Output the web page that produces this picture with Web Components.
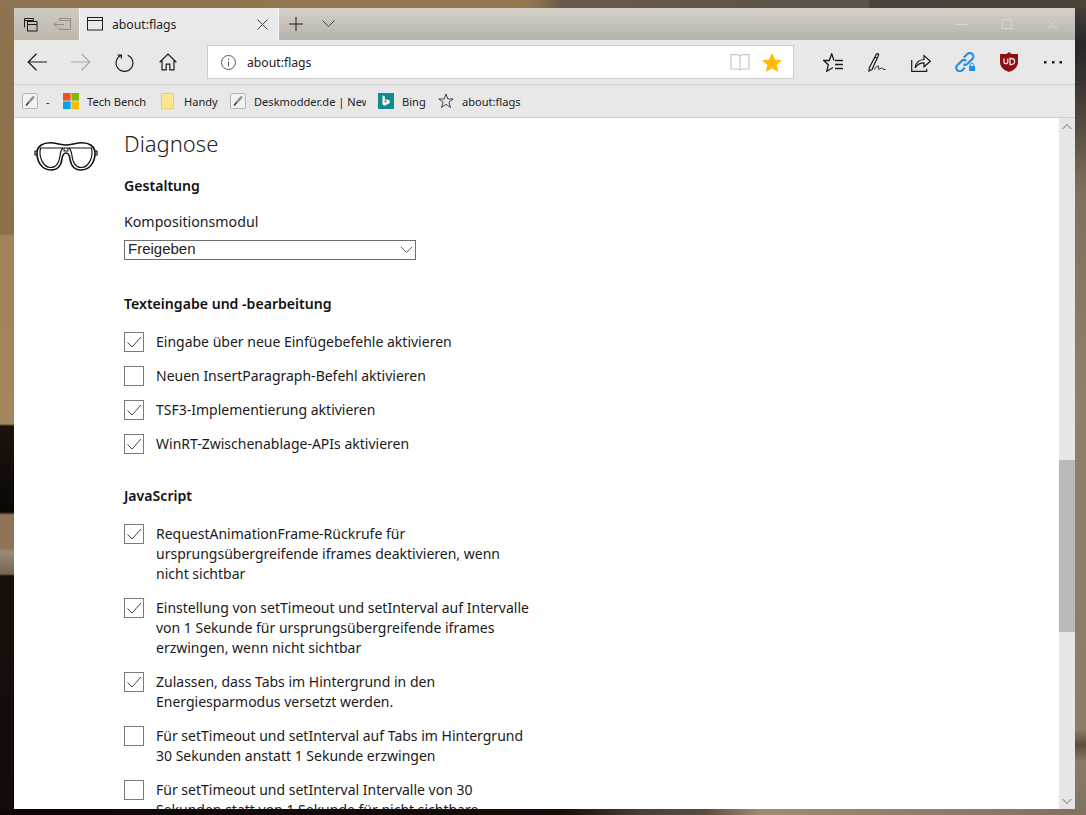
<!DOCTYPE html>
<html lang="de">
<head>
<meta charset="utf-8">
<title>about:flags</title>
<style>
    html, body { margin: 0; padding: 0; height: 100%; overflow: hidden; background: #1a120c; }
    body { font-family: "Noto Sans", "Open Sans", sans-serif; color: #1a1a1a; }
</style>
</head>
<body>
<desktop-frame>
    <browser-window>
        <title-strip slot="title"></title-strip>
        <nav-toolbar slot="nav"></nav-toolbar>
        <fav-bar slot="favs"></fav-bar>
        <flags-page slot="page">
            <flag-section heading="Gestaltung" style="--after:16px">
                <flag-select label="Kompositionsmodul" value="Freigeben"></flag-select>
            </flag-section>
            <flag-section heading="Texteingabe und -bearbeitung" style="--after:18px">
                <flag-check checked>Eingabe über neue Einfügebefehle aktivieren</flag-check>
                <flag-check>Neuen InsertParagraph-Befehl aktivieren</flag-check>
                <flag-check checked>TSF3-Implementierung aktivieren</flag-check>
                <flag-check checked>WinRT-Zwischenablage-APIs aktivieren</flag-check>
            </flag-section>
            <flag-section heading="JavaScript" style="--after:18px">
                <flag-check checked>RequestAnimationFrame-Rückrufe für<br>ursprungsübergreifende iframes deaktivieren, wenn<br>nicht sichtbar</flag-check>
                <flag-check checked>Einstellung von setTimeout und setInterval auf Intervalle<br>von 1 Sekunde für ursprungsübergreifende iframes<br>erzwingen, wenn nicht sichtbar</flag-check>
                <flag-check checked>Zulassen, dass Tabs im Hintergrund in den<br>Energiesparmodus versetzt werden.</flag-check>
                <flag-check>Für setTimeout und setInterval auf Tabs im Hintergrund<br>30 Sekunden anstatt 1 Sekunde erzwingen</flag-check>
                <flag-check>Für setTimeout und setInterval Intervalle von 30<br>Sekunden statt von 1 Sekunde für nicht sichtbare</flag-check>
            </flag-section>
        </flags-page>
    </browser-window>
</desktop-frame>

<script>
// the text face used all over the browser chrome
const UI_FONT = '"Noto Sans", "Open Sans", sans-serif';

class DesktopFrame extends HTMLElement {
    constructor() {
        super();
        this.attachShadow({ mode: 'open' });
        this.shadowRoot.innerHTML = `
        <style>
            :host {
                display: block;
                width: 1086px;
                height: 815px;
                box-sizing: border-box;
                padding: 8px 11px 6px 14px;
                background:
                    linear-gradient(90deg, #8e7350 0, #94774f 530px, #6b5a4c 560px, #5b5449 800px, #5b5449 868px, #4a443c 870px, #4c4338 1086px) top / 100% 8px no-repeat,
                    linear-gradient(90deg, #0d0807 0, #140d0a 560px, #4a3e35 640px, #5b4c40 705px, #a08b72 760px, #7f705f 1086px) bottom / 100% 6px no-repeat,
                    linear-gradient(180deg, #8e7350 0, #8c7049 234px, #a3845a 236px, #a5865c 424px, #1c120c 426px, #0c0705 512px, #8f7354 515px, #8f7354 548px, #9b8a76 552px, #776554 574px, #170e09 576px, #140c09 100%) left / 14px 100% no-repeat,
                    linear-gradient(180deg, #4a443c 0, #2a2526 45px, #3e3733 90px, #7e705d 190px, #8f8068 400px, #8b7c65 730px, #5a4d3e 745px, #887a66 762px, #7f7362 100%) right / 11px 100% no-repeat;
            }
        </style>
        <slot></slot>`;
    }
}

class BrowserWindow extends HTMLElement {
    constructor() {
        super();
        this.attachShadow({ mode: 'open' });
        this.shadowRoot.innerHTML = `
        <style>
            :host {
                display: flex;
                flex-direction: column;
                width: 1061px;
                height: 801px;
                overflow: hidden;
                background: #fff;
            }
        </style>
        <slot name="title"></slot>
        <slot name="nav"></slot>
        <slot name="favs"></slot>
        <slot name="page"></slot>`;
    }
}

class TitleStrip extends HTMLElement {
    constructor() {
        super();
        this.attachShadow({ mode: 'open' });
        this.shadowRoot.innerHTML = `
        <style>
            :host {
                display: flex;
                height: 32px;
                flex: none;
                align-items: stretch;
                background: linear-gradient(180deg, #d5d1c9, #b6b3ac);
                font: 12.2px ${UI_FONT};
                color: #1c1c1c;
            }
            #aside {
                width: 65px;
                display: flex;
                align-items: center;
                padding-left: 9px;
                gap: 16px;
                box-sizing: border-box;
                background: linear-gradient(180deg, #cfcac1, #bdb7ac);
            }
            #tab {
                width: 200px;
                box-sizing: border-box;
                background: #eaeaea;
                border-left: 1px solid #f6f6f6;
                border-right: 1px solid #f6f6f6;
                display: flex;
                align-items: center;
                padding-left: 7px;
            }
            #tab span { margin-left: 9px; flex: 1; }
            #tab svg:last-child { margin-right: 10px; }
            #new {
                display: flex;
                align-items: center;
                padding-left: 10px;
                gap: 19px;
            }
            #controls {
                margin-left: auto;
                display: flex;
                align-items: center;
                gap: 35px;
                padding-right: 17px;
            }
            svg { display: block; flex: none; fill: none; stroke-width: 1; }
        </style>
        <div id="aside">
            <svg width="15" height="15" viewBox="0 0 15 15" stroke="#1c1c1c">
                <path d="M1.5 10.5v-9h9v2M1.5 3.5h9"/>
                <rect x="4.5" y="4.5" width="9.5" height="9.5"/>
                <path d="M4.5 7.5h9.5"/>
            </svg>
            <svg width="17" height="13" viewBox="0 0 17 13" stroke="#8f8b84">
                <path d="M5.5 2.5V.5h11v11h-11v-2M5.5 2.500h11M0 6.500h10M3 3.500l-3 3 3 3"/>
            </svg>
        </div>
        <div id="tab">
            <svg width="16" height="14" viewBox="0 0 16 14" stroke="#1c1c1c">
                <rect x=".5" y=".5" width="15" height="12.5"/>
                <path d="M.5 3.5h15"/>
            </svg>
            <span>about:flags</span>
            <svg width="11" height="11" viewBox="0 0 11 11" stroke="#444"><path d="M.5.5l10 10M10.5.5l-10 10"/></svg>
        </div>
        <div id="new">
            <svg width="14" height="14" viewBox="0 0 14 14" stroke="#1c1c1c"><path d="M7 0v14M0 7h14"/></svg>
            <svg width="13" height="8" viewBox="0 0 13 8" stroke="#444"><path d="M.5.5l6 6 6-6"/></svg>
        </div>
        <div id="controls">
            <svg width="11" height="1" viewBox="0 0 11 1" stroke="#d9d7d2"><path d="M0 .5h11"/></svg>
            <svg width="10" height="10" viewBox="0 0 10 10" stroke="#d9d7d2"><rect x=".5" y=".5" width="9" height="9"/></svg>
            <svg width="11" height="11" viewBox="0 0 11 11" stroke="#d9d7d2"><path d="M.5.5l10 10M10.5.5l-10 10"/></svg>
        </div>`;
    }
}

class NavToolbar extends HTMLElement {
    constructor() {
        super();
        this.attachShadow({ mode: 'open' });
        this.shadowRoot.innerHTML = `
        <style>
            :host {
                display: flex;
                flex: none;
                height: 45px;
                box-sizing: border-box;
                align-items: center;
                background: #e8e8e8;
                border-bottom: 1px solid #cfcfcf;
                font: 12.2px ${UI_FONT};
                color: #1c1c1c;
            }
            svg { display: block; flex: none; fill: none; stroke: #1c1c1c; stroke-width: 1.2; }
            #left {
                width: 193px;
                display: flex;
                align-items: center;
                gap: 24px;
                padding-left: 13px;
                box-sizing: border-box;
            }
            #left .home { margin-left: 1px; }
            #address {
                width: 587px;
                height: 34px;
                box-sizing: border-box;
                background: #fff;
                border: 1px solid #cdcdcd;
                display: flex;
                align-items: center;
                padding-left: 13px;
            }
            #address span { margin-left: 11px; flex: 1; }
            #address .book { margin-right: 12px; }
            #address .star { margin-right: 11px; }
            #right {
                flex: 1;
                display: flex;
                align-items: center;
                gap: 25px;
                padding-left: 29px;
            }
            #right .link, #right .ublock { margin-left: -1px; }
            #right .more { margin-left: 1px; }
        </style>
        <div id="left">
            <svg width="20" height="18" viewBox="0 0 20 18"><path d="M20 9H1M9.5.8L1.2 9l8.300 8.200"/></svg>
            <svg width="20" height="18" viewBox="0 0 20 18" style="stroke:#a8a8a8"><path d="M0 9h19M10.5.8L18.8 9l-8.300 8.200"/></svg>
            <svg width="19" height="19" viewBox="0 0 19 19"><path d="M6.300 2.300a8.400 8.400 0 1 0 6.400 0"/><path d="M6.400 1.400v4M2.600 2.200h3.800"/></svg>
            <svg class="home" width="18" height="18" viewBox="0 0 18 18"><path d="M.6 9.300L9 1l8.400 8.300M3 7.200v9.600h4.200v-5.600h3.600v5.600H15V7.200"/></svg>
        </div>
        <div id="address">
            <svg width="15" height="15" viewBox="0 0 15 15" style="stroke:#555;stroke-width:1"><circle cx="7.500" cy="7.500" r="7"/><path d="M7.500 6.500v5M7.500 3.500V5"/></svg>
            <span>about:flags</span>
            <svg class="book" width="20" height="18" viewBox="0 0 20 18" style="stroke:#c6c6c6;stroke-width:1.2"><path d="M10 3v13M1 1.600h6.500L10 3l2.500-1.400H19V16h-6.500L10 17l-2.500-1H1z"/></svg>
            <svg class="star" width="20" height="19" viewBox="0 0 20 19" style="stroke:none;fill:#ffb900"><path d="M10 0l2.900 6.700 7.100.6-5.400 4.700 1.600 7L10 15.300 3.800 19l1.600-7L0 7.300l7.100-.6z"/></svg>
        </div>
        <div id="right">
            <svg width="20" height="19" viewBox="0 0 20 19" style="stroke-width:1.3"><path d="M11 7.500L8.700.8 6.300 7.500H.8l4.500 4.300-1.500 6.400 6.200-3.700"/><path d="M12 7.500h8M12 11.500h8M12 15.500h8"/></svg>
            <svg width="18" height="19" viewBox="0 0 18 19"><path d="M8.500 1c1-.8 2.500 0 2 1.300L4 16.500l-3 1.500.3-3.300zM6.800 4.200l2.300 1"/><path d="M6 16.500c2-2.500 3.500-4 4.500-3.200.6.600-.6 2.700.4 3 1 .3 2-1.800 3-1.300.8.400 1 1.500 3.600 1.500" style="stroke-width:1"/></svg>
            <svg width="20" height="19" viewBox="0 0 20 19"><path d="M.7 7v11.300h15v-2.500"/><path d="M4 15c.3-5 4-8.500 9-8.500v-4l6.300 5.700-6.300 5.600v-4c-4 0-7 1.800-9 5.200z"/></svg>
            <svg class="link" width="21" height="20" viewBox="0 0 21 20" style="stroke:#1e90e8;stroke-width:2.2"><path d="M8.800 5.500L12.300 2a3.500 3.500 0 0 1 5 5l-4.800 4.800a3.500 3.500 0 0 1-4 .5"/><path d="M11.200 9a3.500 3.500 0 0 0-4-.6l-4.900 4.800a3.500 3.500 0 0 0 5 5l2.500-2.500"/><rect x="14" y="14" width="6" height="5" style="fill:#1e90e8;stroke:none"/><path d="M15.300 14v-1.200a1.700 1.700 0 0 1 3.400 0V14" style="stroke-width:1"/></svg>
            <svg class="ublock" width="18" height="20" viewBox="0 0 18 20"><path d="M9 0l2.500 2H18v8c0 5-4 8.500-9 10-5-1.500-9-5-9-10V2h6.500z" style="stroke:none;fill:#8f0f12"/><path d="M4 6.500v3.300a1.900 1.900 0 0 0 3.800 0V6.500M10 6.500h1.600a3 3 0 0 1 0 6H10z" style="stroke:#f0e4e2;stroke-width:1.300"/></svg>
            <svg class="more" width="18" height="3" viewBox="0 0 18 3" style="stroke:none;fill:#1c1c1c"><rect width="2.500" height="2.500"/><rect x="8" width="2.500" height="2.500"/><rect x="15.500" width="2.500" height="2.500"/></svg>
        </div>`;
    }
}

class FavBar extends HTMLElement {
    constructor() {
        super();
        this.attachShadow({ mode: 'open' });
        const pen = `<svg class="i" width="16" height="16" viewBox="0 0 16 16">
            <rect x=".5" y=".5" width="15" height="15" rx="1.500" fill="#f2f2f2" stroke="#b5b5b5"/>
            <path d="M12 3.500L7 9" stroke="#888" stroke-width="2"/><path d="M7 9l-3 3.500" stroke="#333" stroke-width="1.500"/></svg>`;
        this.shadowRoot.innerHTML = `
        <style>
            :host {
                display: flex;
                flex: none;
                height: 33px;
                box-sizing: border-box;
                align-items: center;
                background: #e8e8e8;
                border-bottom: 1px solid #cfcfcf;
                padding-left: 8px;
                font: 11.1px ${UI_FONT};
                color: #222;
            }
            .i { display: block; flex: none; }
            .f { display: flex; align-items: center; gap: 8px; white-space: nowrap; flex: none; }
            .clip { width: 112px; overflow: hidden; }
        </style>
        <div class="f" style="width:41px">${pen}<span>-</span></div>
        <div class="f" style="width:98px">
            <svg class="i" width="16" height="16" viewBox="0 0 16 16">
                <rect width="7.600" height="7.600" fill="#f25022"/><rect x="8.400" width="7.600" height="7.600" fill="#7fba00"/>
                <rect y="8.400" width="7.600" height="7.600" fill="#00a4ef"/><rect x="8.400" y="8.400" width="7.600" height="7.600" fill="#ffb900"/>
            </svg><span>Tech Bench</span>
        </div>
        <div class="f" style="width:69px;gap:10px">
            <svg class="i" width="13" height="16" viewBox="0 0 13 16">
                <rect x=".5" y=".5" width="12" height="15" fill="#fde68f" stroke="#edcb6a"/>
            </svg><span>Handy</span>
        </div>
        <div class="f" style="width:148px">${pen}<span class="clip">Deskmodder.de | News</span></div>
        <div class="f" style="width:60px">
            <svg class="i" width="16" height="16" viewBox="0 0 16 16">
                <rect width="16" height="16" fill="#138a8f"/>
                <path d="M4.500 2.500l2.300.8v6.500l2.400-1.300-1.200-.6-.8-2 4.500 1.600v2.400l-5 2.800-2.200-1.200z" fill="#fff"/>
            </svg><span>Bing</span>
        </div>
        <div class="f">
            <svg class="i" width="16" height="16" viewBox="0 0 16 16" fill="none" stroke="#444">
                <path d="M8 1l1.800 5h5.400l-4.300 3.200 1.600 5.300L8 11.300l-4.500 3.200 1.600-5.300L.8 6h5.400z"/>
            </svg><span>about:flags</span>
        </div>`;
    }
}

class FlagsPage extends HTMLElement {
    constructor() {
        super();
        this.attachShadow({ mode: 'open' });
        this.shadowRoot.innerHTML = `
        <style>
            :host {
                display: flex;
                flex: 1;
                min-height: 0;
                overflow: hidden;
                background: #fff;
                font: 14px/20px ${UI_FONT};
                color: #1a1a1a;
            }
            #side {
                width: 110px;
                flex: none;
                padding: 24px 0 0 20px;
                box-sizing: border-box;
            }
            #side svg { display: block; }
            #body { flex: 1; min-width: 0; }
            h1 {
                margin: 9px 0 17px;
                font-size: 22px;
                font-weight: 300;
                line-height: 32px;
                color: #222;
            }
            #rail {
                width: 16px;
                flex: none;
                background: #e6e6e6;
                display: flex;
                flex-direction: column;
                align-items: center;
            }
            #rail svg { display: block; flex: none; fill: none; stroke: #6d6d6d; }
            #thumb { width: 16px; height: 172px; background: #b9b9b9; margin-top: 330px; }
            #down { margin-top: auto; margin-bottom: 4px; }
        </style>
        <div id="side">
            <svg width="66" height="30" viewBox="0 0 66 30" fill="none" stroke="#111" stroke-width="1.600">
                <path d="M3 11C3 4 9 .8 16 .8c6 0 11 2.200 16 2.200S42 .8 48 .8c7 0 13 3.200 13 10.200 0 9-5 17-14 17-7 0-10-4-11-11-.5-4-1.500-6-4-6s-3.500 2-4 6c-1 7-4 11-11 11C8 28 3 20 3 11z"/>
                <path d="M6 6h23.500M34.500 6H58" stroke-width="1.200"/>
                <path d="M6.500 6C4.500 15 9 25.500 17 25.500c6 0 8.500-6.500 9-11.500.3-3 1-6 3-8" stroke-width="1.200"/>
                <path d="M57.500 6c2 9-2.500 19.500-10.500 19.500-6 0-8.500-6.500-9-11.500-.3-3-1-6-3-8" stroke-width="1.200"/>
                <rect x="30" y="6" width="4" height="3" stroke-width="1"/>
                <path d="M3 9H1v4h2M61 9h2v4h-2" stroke-width="1.200"/>
            </svg>
        </div>
        <div id="body">
            <h1>Diagnose</h1>
            <slot></slot>
        </div>
        <div id="rail">
            <svg width="12" height="7" viewBox="0 0 12 7" style="margin-top:5px"><path d="M1.500 6L6 1.500 10.500 6"/></svg>
            <div id="thumb"></div>
            <svg id="down" width="12" height="7" viewBox="0 0 12 7"><path d="M1.500 1L6 5.500 10.500 1"/></svg>
        </div>`;
    }
}

class FlagSection extends HTMLElement {
    constructor() {
        super();
        this.attachShadow({ mode: 'open' });
        this.shadowRoot.innerHTML = `
        <style>
            :host {
                display: block;
                margin-bottom: 32px;
            }
            h2 {
                margin: 0 0 var(--after, 16px);
                font-size: 14.1px;
                line-height: 20px;
                font-weight: 600;
                color: #111;
            }
        </style>
        <h2></h2>
        <slot></slot>`;
    }

    connectedCallback() {
        this.shadowRoot.querySelector('h2').textContent = this.getAttribute('heading');
    }
}

class FlagSelect extends HTMLElement {
    constructor() {
        super();
        this.attachShadow({ mode: 'open' });
        this.shadowRoot.innerHTML = `
        <style>
            :host { display: block; margin-bottom: 34px; }
            #label { display: block; margin-bottom: 8px; font-size: 14.2px; }
            #box {
                width: 292px;
                height: 20px;
                box-sizing: border-box;
                border: 1px solid #6e6e6e;
                display: flex;
                align-items: center;
                justify-content: space-between;
                padding: 0 3px;
                font: 15px/18px "Liberation Sans", Arial, sans-serif;
                color: #222;
            }
            #value { position: relative; top: -1px; }
            svg { display: block; fill: none; stroke: #666; margin-right: -1px; }
        </style>
        <span id="label"></span>
        <div id="box"><span id="value"></span>
            <svg width="13" height="8" viewBox="0 0 13 8"><path d="M.7.7l5.800 5.800L12.300.7"/></svg>
        </div>`;
    }

    connectedCallback() {
        this.shadowRoot.querySelector('#label').textContent = this.getAttribute('label');
        this.shadowRoot.querySelector('#value').textContent = this.getAttribute('value');
    }
}

class FlagCheck extends HTMLElement {
    constructor() {
        super();
        this.attachShadow({ mode: 'open' });
        this.shadowRoot.innerHTML = `
        <style>
            :host {
                display: flex;
                gap: 12px;
                margin-bottom: 14px;
                white-space: nowrap;
            }
            #box {
                width: 20px;
                height: 20px;
                flex: none;
                box-sizing: border-box;
                border: 1px solid #7a7a7a;
                background: #fff;
            }
            svg { display: none; fill: none; stroke: #444; stroke-width: 1; }
            :host([checked]) svg { display: block; }
        </style>
        <div id="box">
            <svg width="18" height="18" viewBox="0 0 18 18"><path d="M2.500 9.500l4.500 4.500 9-10"/></svg>
        </div>
        <div><slot></slot></div>`;
    }
}

customElements.define('desktop-frame', DesktopFrame);
customElements.define('browser-window', BrowserWindow);
customElements.define('title-strip', TitleStrip);
customElements.define('nav-toolbar', NavToolbar);
customElements.define('fav-bar', FavBar);
customElements.define('flags-page', FlagsPage);
customElements.define('flag-section', FlagSection);
customElements.define('flag-select', FlagSelect);
customElements.define('flag-check', FlagCheck);
</script>
</body>
</html>
